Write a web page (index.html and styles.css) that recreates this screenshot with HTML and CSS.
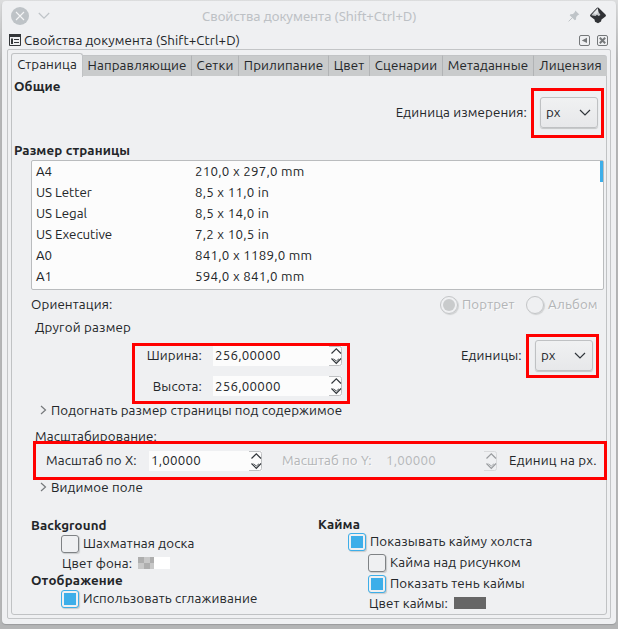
FILE: index.html
```html
<!DOCTYPE html>
<html lang="ru">
<head>
<meta charset="utf-8">
<title>Свойства документа</title>
<link rel="stylesheet" href="styles.css">
</head>
<body>
<svg class="defs" width="0" height="0">
  <symbol id="spin" viewBox="0 0 13 20"><path class="edge" d="M0 .5H10.5Q12.5.5 12.5 2.500V17.500Q12.500 19.500 10.500 19.500H0"/><path d="M2.500 7.500 7.300 2.800 12 7.500M2.500 12.500l4.800 4.800L12 12.500"/><path class="inner" d="M4.500 12.800l2.800 2.200L10 12.800"/></symbol>
</svg>
<div class="window">
  <header class="titlebar">
    <svg class="close" width="18" height="18" viewBox="0 0 18 18"><circle cx="9" cy="9" r="9" fill="#bec3c7"/><path d="M5 5l8 8M13 5l-8 8" stroke="#f4f5f6" stroke-width="1.1"/></svg>
    <svg class="shade" width="12" height="8" viewBox="0 0 12 8"><path d="M.8 1 6 6.200 11.200 1" fill="none" stroke="#bec3c7" stroke-width="1.200"/></svg>
    <span class="title">Свойства документа (Shift+Ctrl+D)</span>
    <svg class="pin" width="12" height="12" viewBox="0 0 12 12"><path d="M7.300.5 11.300 4.500 10 5 8.200 7 8 9.500 6.800 10.300 1.700 5.200 2.500 4.200 5 4 6.900 2z" fill="#bfc4c8"/><path d="M.6 11.400 4.500 7.500" stroke="#bfc4c8"/></svg>
    <svg class="logo" width="18" height="17" viewBox="0 0 18 17"><path d="M8 .8Q8.800 0 9.600.8L16.500 7.600Q17.500 8.700 16.500 9.600L12.500 12.500 12 14.500 9 16.300 6 14.800 5.500 12.500 1.500 9.600Q.5 8.700 1.500 7.600z" fill="#303236"/><path d="M8.800 1.300 9.500 5 11.500 8 9.500 9 8 7.800 6.500 9 2.300 8.200 5 5.100z" fill="#c4c7ca"/><path d="M8.800 1.300 9.200 5.500 7 7.500 4.500 6.300z" fill="#e4e6e8"/></svg>
  </header>
  <div class="dockhead">
    <svg width="12" height="12" viewBox="0 0 12 12"><path d="M.5.5H11.500V11.500H.5z" fill="none" stroke="#333639"/><path d="M0 0H12V3H0zM2 4.500H4V10H2zM5 5h5v1H5zM5 8h5v1H5z" fill="#333639"/></svg>
    <span class="docktitle">Свойства документа (Shift+Ctrl+D)</span>
    <svg class="dbtn" width="11" height="11" viewBox="0 0 11 11"><rect x=".5" y=".5" width="10" height="10" rx="1.500" fill="none" stroke="#75787a"/><path d="M8 2.800V8L2.800 5.400z" fill="#75787a"/></svg>
    <svg class="dbtn" width="11" height="11" viewBox="0 0 11 11"><rect x=".5" y=".5" width="10" height="10" rx="1.500" fill="none" stroke="#75787a"/><path d="M2.800 2.800l5.400 5.400M8.200 2.800 2.800 8.200" stroke="#75787a" stroke-width="2"/></svg>
  </div>
  <div class="frame">
    <nav class="tabs">
      <span class="tab active t1">Страница</span><span class="tab t2">Направляющие</span><span class="tab t3">Сетки</span><span class="tab t4">Прилипание</span><span class="tab t5">Цвет</span><span class="tab t6">Сценарии</span><span class="tab t7">Метаданные</span><span class="tab t8">Лицензия</span>
    </nav>
    <main class="pane">
      <h2 class="general">Общие</h2>
      <div class="unitrow">
        <span class="unitlabel">Единица измерения:</span>
        <div class="mark selectmark"><div class="select"><span>px</span><svg width="12" height="8" viewBox="0 0 12 8"><path d="M1 1 6 6 11 1"/></svg></div></div>
      </div>
      <h2 class="pagesize">Размер страницы</h2>
      <div class="list">
        <div class="item"><span>A4</span><span class="dim">210,0 x 297,0 mm</span></div>
        <div class="item"><span>US Letter</span><span class="dim">8,5 x 11,0 in</span></div>
        <div class="item"><span>US Legal</span><span class="dim">8,5 x 14,0 in</span></div>
        <div class="item"><span>US Executive</span><span class="dim">7,2 x 10,5 in</span></div>
        <div class="item"><span>A0</span><span class="dim">841,0 x 1189,0 mm</span></div>
        <div class="item"><span>A1</span><span class="dim">594,0 x 841,0 mm</span></div>
        <i class="thumb"></i>
      </div>
      <div class="orient">
        <span class="orientlabel">Ориентация:</span>
        <i class="radio on"></i><span class="off portrait">Портрет</span>
        <i class="radio"></i><span class="off album">Альбом</span>
      </div>
      <div class="custom">Другой размер</div>
      <div class="sizes">
        <div class="mark sizemark">
          <div class="field"><span class="width">Ширина:</span><div class="input"><span>256,00000</span><svg class="spin" width="13" height="20"><use href="#spin"/></svg></div></div>
          <div class="field"><span class="height">Высота:</span><div class="input"><span>256,00000</span><svg class="spin" width="13" height="20"><use href="#spin"/></svg></div></div>
        </div>
        <span class="units">Единицы:</span>
        <div class="mark selectmark low"><div class="select"><span>px</span><svg width="12" height="8" viewBox="0 0 12 8"><path d="M1 1 6 6 11 1"/></svg></div></div>
      </div>
      <div class="expander fit"><svg width="7" height="10" viewBox="0 0 7 10"><path d="M1 1 5.500 5 1 9"/></svg><span>Подогнать размер страницы под содержимое</span></div>
      <div class="scaling">Масштабирование:</div>
      <div class="mark scale">
        <span class="sx">Масштаб по X:</span>
        <div class="input"><span>1,00000</span><svg class="spin" width="13" height="20"><use href="#spin"/></svg></div>
        <span class="sy off">Масштаб по Y:</span>
        <div class="input disabled"><span>1,00000</span><svg class="spin" width="13" height="20"><use href="#spin"/></svg></div>
        <span class="per">Единиц на px.</span>
      </div>
      <div class="expander view"><svg width="7" height="10" viewBox="0 0 7 10"><path d="M1 1 5.500 5 1 9"/></svg><span>Видимое поле</span></div>
      <div class="bottom">
        <section class="left">
          <h2 class="bg">Background</h2>
          <div class="check"><i class="box"></i><span class="checker">Шахматная доска</span></div>
          <div class="color"><span class="bgcolor">Цвет фона:</span><i class="swatch alpha"></i></div>
          <h2 class="display">Отображение</h2>
          <div class="check"><i class="box on"></i><span class="smooth">Использовать сглаживание</span></div>
        </section>
        <section class="right">
          <h2 class="border">Кайма</h2>
          <div class="check"><i class="box on"></i><span class="showb">Показывать кайму холста</span></div>
          <div class="check sub"><i class="box"></i><span class="over">Кайма над рисунком</span></div>
          <div class="check sub"><i class="box on"></i><span class="shadow">Показать тень каймы</span></div>
          <div class="color"><span class="bcolor">Цвет каймы:</span><i class="swatch"></i></div>
        </section>
      </div>
    </main>
  </div>
</div>
</body>
</html>
```
FILE: styles.css
```css
* { box-sizing: border-box; }
body {
  margin: 0; width: 618px; height: 629px; overflow: hidden;
  padding: 1px 1px 0 2px;
  background: linear-gradient(#dcddde, #b4b5b6 60px);
  font: 13.33px/20px Ubuntu, "Noto Sans", sans-serif;
  letter-spacing: .12px;
  color: #232629; white-space: nowrap;
}
i { display: block; flex: none; }
svg { display: block; flex: none; }
span { flex: none; }
.defs { position: absolute; }
h2 { margin: 0; font-size: 13.33px; line-height: 22px; height: 20px; }
.window {
  height: 623px; width: 614px; background: #eff0f2; border-radius: 4px;
  box-shadow: 0 1px 1px #999b9d;
}
.titlebar { height: 29px; display: flex; align-items: center; padding: 0 9px; color: #bdc1c5; }
.shade { margin-left: 9px; }
.title { width: 215px; margin: 0 0 0 152px; font-family: "Noto Sans", sans-serif; font-size: 13px; letter-spacing: 0; }
.pin { margin-left: 151px; }
.logo { margin-left: 9px; }
.dockhead { height: 19px; display: flex; align-items: center; padding: 1px 8px 0 7px; }
.docktitle { margin: 2px auto 0 3px; letter-spacing: .08px; }
.dbtn { margin-left: 7px; }
.frame { margin-left: 5px; width: 604px; height: 570px; border: 1px solid #c3c5c7; border-radius: 2px; padding: 3px 3px; }
.tabs { display: flex; align-items: flex-end; height: 23px; }
.tab {
  height: 21px; line-height: 19px; background: #c9cbcc; text-align: center;
  border-right: 1px solid #b1b3b5; border-top: 1px solid #c2c4c6;
}
.tab.active {
  height: 24px; line-height: 21px; margin-bottom: -1px; background: #eff0f2; position: relative;
  border: 1px solid #c0c2c4; border-bottom: 0; border-radius: 3px 3px 0 0;
}
.t1 { width: 72px; } .t2 { width: 109px; } .t3 { width: 47px; } .t4 { width: 90px; }
.t5 { width: 41px; } .t6 { width: 73px; } .t7 { width: 91px; }
.t8 { width: 73px; border-radius: 0 3px 0 0; border-right: 0; }
.pane { width: 596px; height: 540px; border: 1px solid #c0c2c4; border-radius: 0 0 3px 3px; margin-top: -1px; }
.general, .pagesize { margin-left: 2px; }
.unitrow { display: flex; margin: -8px 2px 0 0; height: 50px; justify-content: flex-end; line-height: 50px; }
.mark { border: 3px solid #f00; }
.selectmark { width: 73px; height: 50px; padding: 6px; margin-left: 4px; }
.select {
  width: 58px; height: 31px; border: 1px solid #bfc1c3; border-radius: 3px;
  background: linear-gradient(#f0f1f2, #e7e8ea); box-shadow: 0 1px 1px #c4c6c7;
  display: flex; align-items: center; justify-content: space-between; padding: 0 6px 0 5px; line-height: 28px;
}
.select span { margin-top: 1px; }
.select path { fill: none; stroke: #31363b; stroke-width: 1.2; }
.pagesize { margin-top: 2px; }
.list { position: relative; width: 573px; height: 130px; margin-left: 19px; border: 1px solid #babcbe; border-radius: 2px; background: #fcfcfc; }
.item { display: grid; grid-template-columns: 159px 1fr; height: 21px; padding-left: 4px; line-height: 21px; letter-spacing: -.05px; }
.dim, .input span { letter-spacing: .25px; }
.thumb { position: absolute; right: 0; top: 0; width: 3px; height: 21px; background: #3daee9; }
.orient { display: flex; align-items: center; height: 24px; margin: 3px 0 0 19px; }
.orientlabel { width: 409px; }
.off { color: #b3b5b7; text-shadow: 1px 1px #fafafa; }
.radio { width: 18px; height: 18px; border: 1px solid #c3c5c7; border-radius: 50%; box-shadow: 1px 1px 1px #cfd1d2; padding: 2px; }
.radio.on::before { content: ""; display: block; width: 12px; height: 12px; border-radius: 50%; background: #c9cbcc; }
.portrait { width: 64px; margin-left: 4px; }
.album { margin-left: 4px; }
.custom { height: 17px; line-height: 22px; letter-spacing: .2px; margin-left: 23px; }
.sizes { display: flex; height: 70px; padding-left: 120px; }
.sizemark { width: 218px; height: 61px; margin-top: 9px; }
.field { display: flex; justify-content: flex-end; padding-right: 5px; height: 20px; line-height: 20px; margin-bottom: 10px; }
.field + .field { line-height: 22px; }
.input { display: flex; justify-content: space-between; width: 129px; height: 20px; background: #fcfcfc; padding-left: 2px; }
.field .input { margin-left: 11px; }
.spin { fill: none; stroke: #31363b; stroke-width: 1.2; }
.edge { stroke: #bfc1c3; stroke-width: 1; }
.inner { stroke-width: .8; }
.units { width: 62px; margin: 12px 0 0 111px; }
.low { height: 44px; padding: 3px 6px; margin-left: 3px; }
.expander { display: flex; align-items: center; margin-left: 28px; height: 20px; }
.expander path { fill: none; stroke: #76797c; stroke-width: 1.2; }
.expander span { margin: 2px 0 0 4px; }
.fit { margin-top: -4px; }
.scaling { height: 20px; line-height: 22px; margin: 6px 0 0 23px; }
.scale { display: flex; align-items: center; position: relative; width: 574px; height: 39px; margin: -5px 0 0 21px; padding-left: 10px; line-height: 20px; }
.sx { width: 103px; }
.scale .input { width: 113px; }
.scale .sy { width: 102px; margin-left: 20px; }
.scale .disabled { background: none; color: #b6b8ba; }
.disabled .spin { opacity: .45; }
.scale .per { margin-left: 12px; letter-spacing: .2px; }
.view { margin-top: -3px; }
.bottom { display: flex; }
.left { width: 287px; padding: 18px 0 0 19px; }
.right { padding: 17px 0 0 19px; }
.left .bg { height: 18px; }
.right .border { height: 17px; }
.check { display: flex; align-items: center; height: 21px; margin-left: 30px; line-height: 18px; }
.check span { margin: 0 0 0 4px; letter-spacing: .15px; }
.box { width: 18px; height: 18px; border: 1px solid #7f8285; border-radius: 3px; box-shadow: 1px 1px 1px #c9cbcc; }
.box.on { border-color: #3daee9; background: #3daee9; background-clip: content-box; padding: 2px; }
.check.sub { margin-left: 50px; }
.color { display: flex; align-items: center; margin-left: 31px; height: 18px; }
.color span { margin-top: 2px; }
.swatch { width: 32px; height: 12px; background: #666; }
.left .swatch { background: linear-gradient(#fff, #fff) 16px 0 / 16px 12px no-repeat, conic-gradient(#c8c8c8 25%, #aeaeae 0 50%, #c8c8c8 0 75%, #aeaeae 0) 0 0 / 12px 12px; }
.bgcolor { width: 76px; }
.bcolor { width: 85px; }
.left .display { height: 16px; line-height: 18px; }
.right .color { margin-left: 51px; }
```
